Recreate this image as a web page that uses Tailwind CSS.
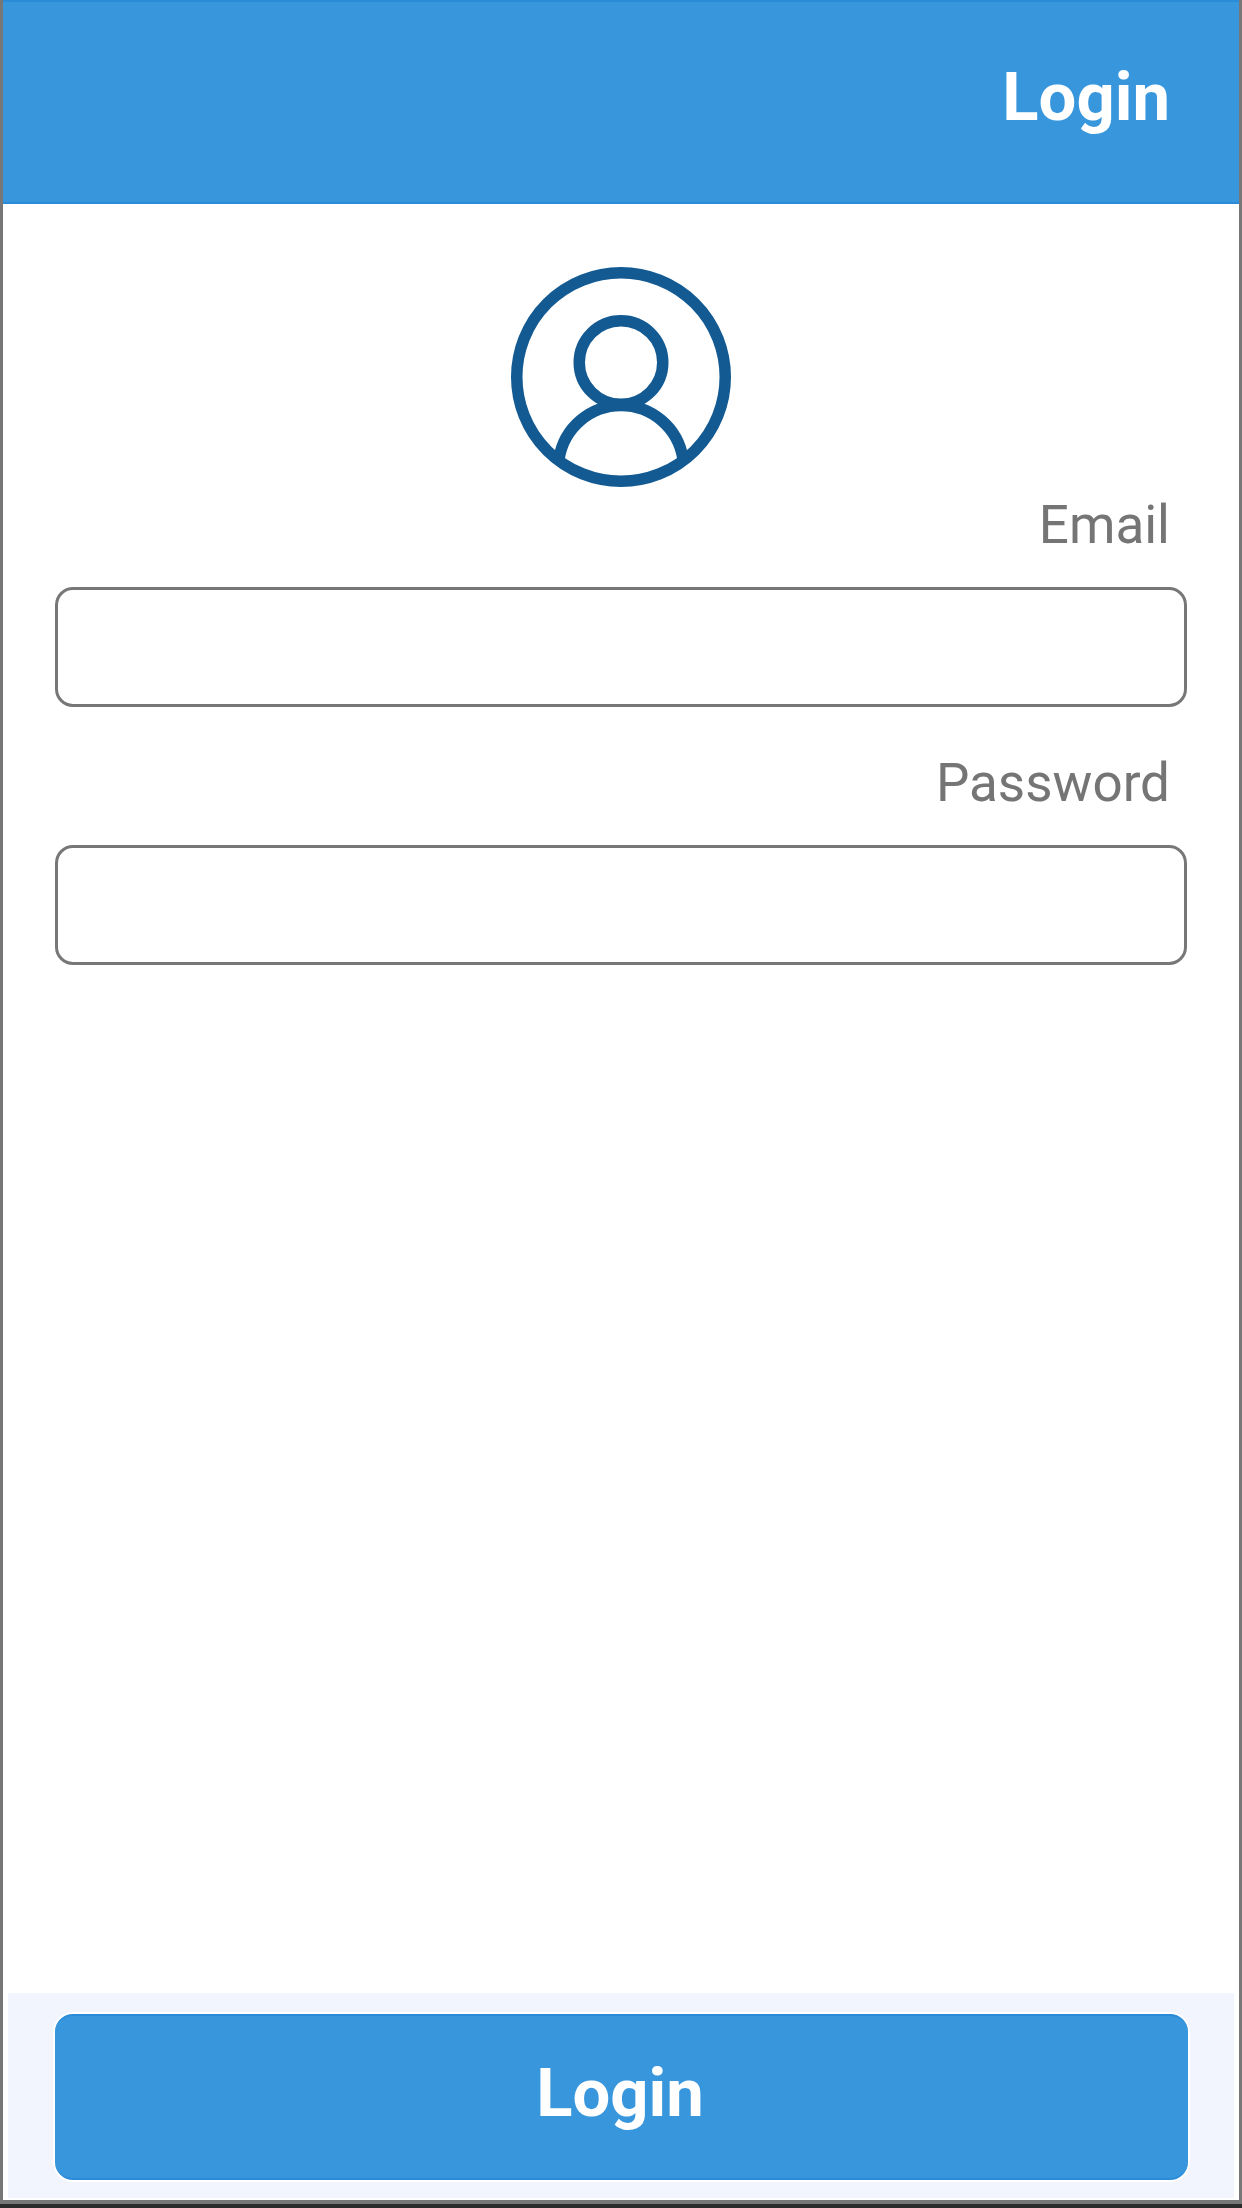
<!DOCTYPE html>
<html lang="en">
<head>
<meta charset="utf-8">
<title>Login</title>
<script src="https://cdn.jsdelivr.net/npm/@tailwindcss/browser@4"></script>
</head>
<body class="bg-[#2b2b2b] font-[Roboto,sans-serif]">
<div class="w-[1242px] h-[2208px] pb-[4px]">
  <div class="h-full flex flex-col bg-white border-x-[3px] border-b-[4px] border-[#777777]">
    <header class="h-[204px] shrink-0 flex items-center justify-end bg-[#3796dc] border-y-[2px] border-[#2a8bd9] pr-[69px]">
      <h1 class="text-[67px] leading-[76px] font-bold text-white mb-[11px]">Login</h1>
    </header>
    <main class="flex-1 flex flex-col pt-[63px]">
      <svg class="self-center w-[220px] h-[220px] shrink-0" viewBox="0 0 220 220" fill="none" stroke="#135a92" stroke-width="11.5">
        <circle cx="110" cy="110" r="104.25"/>
        <circle cx="110" cy="95.5" r="41.75"/>
        <path d="M48 192 C53 160 80 138.5 110 138.5 C140 138.5 167 160 172 192"/>
      </svg>
      <div class="flex flex-col px-[52px]">
        <label class="block pr-[17px] text-right text-[53px] leading-[56px] text-[#757575] mt-[10px] mb-[34px]">Email</label>
        <input type="text" aria-label="Email" class="w-full h-[120px] border-[3px] border-[#777777] rounded-[18px] bg-white">
        <label class="block pr-[17px] text-right text-[53px] leading-[56px] text-[#757575] mt-[48px] mb-[34px]">Password</label>
        <input type="password" aria-label="Password" class="w-full h-[120px] border-[3px] border-[#777777] rounded-[18px] bg-white">
      </div>
    </main>
    <footer class="h-[205px] shrink-0 mx-[5px] mb-[2px] pl-[47px] pr-[46px] pt-[21px] bg-[#f2f4fe]">
      <button class="w-full h-[166px] rounded-[18px] bg-[#3796dc] border-y-[2px] border-[#2a8bd9] shadow-[0_0_0_2px_#ffffff] text-white text-[67px] font-bold pb-[8px] pr-[3px]">Login</button>
    </footer>
  </div>
</div>
</body>
</html>
